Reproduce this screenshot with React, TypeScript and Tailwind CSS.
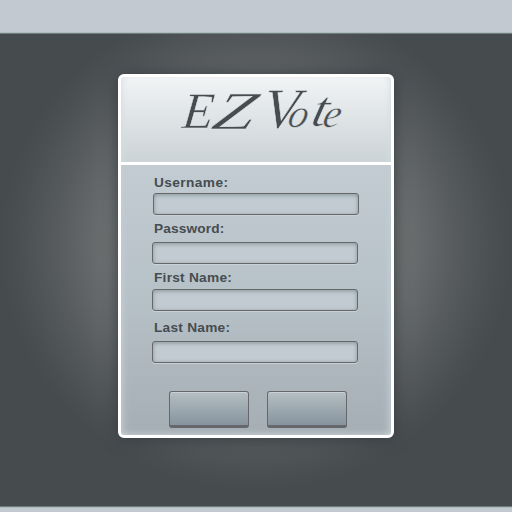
const fields = [
  { label: "Username:", type: "text", labelClass: "mt-[9px] tracking-[0.4px]", inputClass: "mt-[3px] ml-px" },
  { label: "Password:", type: "password", labelClass: "mt-[5px] tracking-[0.15px]", inputClass: "mt-[6px]" },
  { label: "First Name:", type: "text", labelClass: "mt-[5px] tracking-[0.25px]", inputClass: "mt-[4px]" },
  { label: "Last Name:", type: "text", labelClass: "mt-[8px] tracking-[0.25px]", inputClass: "mt-[6px]" },
];

function Field({ label, type, labelClass, inputClass }: (typeof fields)[number]) {
  return (
    <label className="block">
      <span
        className={`block h-4 pl-[2px] text-[13.7px] leading-[18px] font-bold text-[#464c50] ${labelClass}`}
      >
        {label}
      </span>
      <input
        type={type}
        className={`block h-[22px] w-[206px] rounded-[3px] border border-[#65676a] bg-[#c2cbd2] px-2 text-xs outline-none shadow-[inset_0_1px_4px_#87949a,0_1px_0_#cbd2d7] ${inputClass}`}
      />
    </label>
  );
}

function Title() {
  return (
    <h1
      aria-label="EZ Vote"
      className="flex h-[85px] items-start pl-[62px] pt-[5px] font-['Liberation_Serif',serif] text-[51px] leading-[58px] font-normal italic text-[#464c50] [-webkit-text-stroke:0.5px_#e2e6e8]"
    >
      <span className="inline-block w-[32px] -skew-x-6">E</span>
      <span className="inline-block w-[45px] origin-left -skew-x-12 scale-x-[1.45] scale-y-[1.05]">Z</span>
      <span className="inline-block w-[29px] origin-bottom-left -skew-x-6 scale-x-[1.15] scale-y-[1.12] leading-[62px]">V</span>
      <span className="inline-block w-[18px] -skew-x-12 text-[40px] leading-[64px]">o</span>
      <span className="inline-block w-[17px] origin-bottom -skew-x-12 scale-x-[1.25] scale-y-[1.1] text-[46px] leading-[62px]">t</span>
      <span className="inline-block w-[18px] -skew-x-12 text-[40px] leading-[64px]">e</span>
    </h1>
  );
}

function ActionButton({ name }: { name: string }) {
  return (
    <button
      type="button"
      aria-label={name}
      className="h-[37px] w-20 rounded-[3px] border border-b-[3px] border-[#65676a] bg-linear-to-b from-[#b5bfc3] to-[#87949e] shadow-[inset_0_1px_0_#cbd2d6]"
    />
  );
}

export default function App() {
  return (
    <div className="flex h-[512px] w-[512px] flex-col overflow-hidden bg-[#464b4e] font-['Liberation_Sans',sans-serif]">
      <header className="h-[34px] shrink-0 border-b border-[#6f7c7e] bg-[#c2c9d1] shadow-[inset_0_-1px_0_#b0bdbf]" />
      <main className="flex h-[472px] shrink-0 justify-center bg-[radial-gradient(ellipse_256px_246px_at_256px_211px,#969b9d_0%,#6b6f70_58%,#585c5f_77%,#4a4f52_93%,#464b4e_100%)] pt-10">
        <form className="h-[364px] w-[276px] overflow-hidden rounded-[6px] border-[3px] border-white bg-white shadow-[0_1px_15px_#363b3e]">
          <div className="h-[85px] rounded-t-[3px] bg-linear-to-b from-[#f2f4f5] to-[#cbd3d6] shadow-[inset_5px_0_6px_-4px_#d5dddf,inset_-5px_0_6px_-4px_#d5dddf]">
            <Title />
          </div>
          <div className="mt-[3px] flex h-[270px] flex-col rounded-b-[3px] bg-linear-to-b from-[#c2ccd2] via-[#b6c0c7] to-[#a5aeb4] pl-[31px] shadow-[inset_6px_0_7px_-4px_#c3ced2,inset_-6px_0_7px_-4px_#c3ced2,inset_0_-5px_6px_-4px_#c3ced2]">
            {fields.map((field) => (
              <Field key={field.label} {...field} />
            ))}
            <div className="mt-7 flex gap-[18px] pl-[17px]">
              <ActionButton name="Submit" />
              <ActionButton name="Cancel" />
            </div>
          </div>
        </form>
      </main>
      <footer className="h-[6px] shrink-0 border-t border-[#6f7c7e] bg-[#c2c9d1] shadow-[inset_0_1px_0_#b0bdbf]" />
    </div>
  );
}
